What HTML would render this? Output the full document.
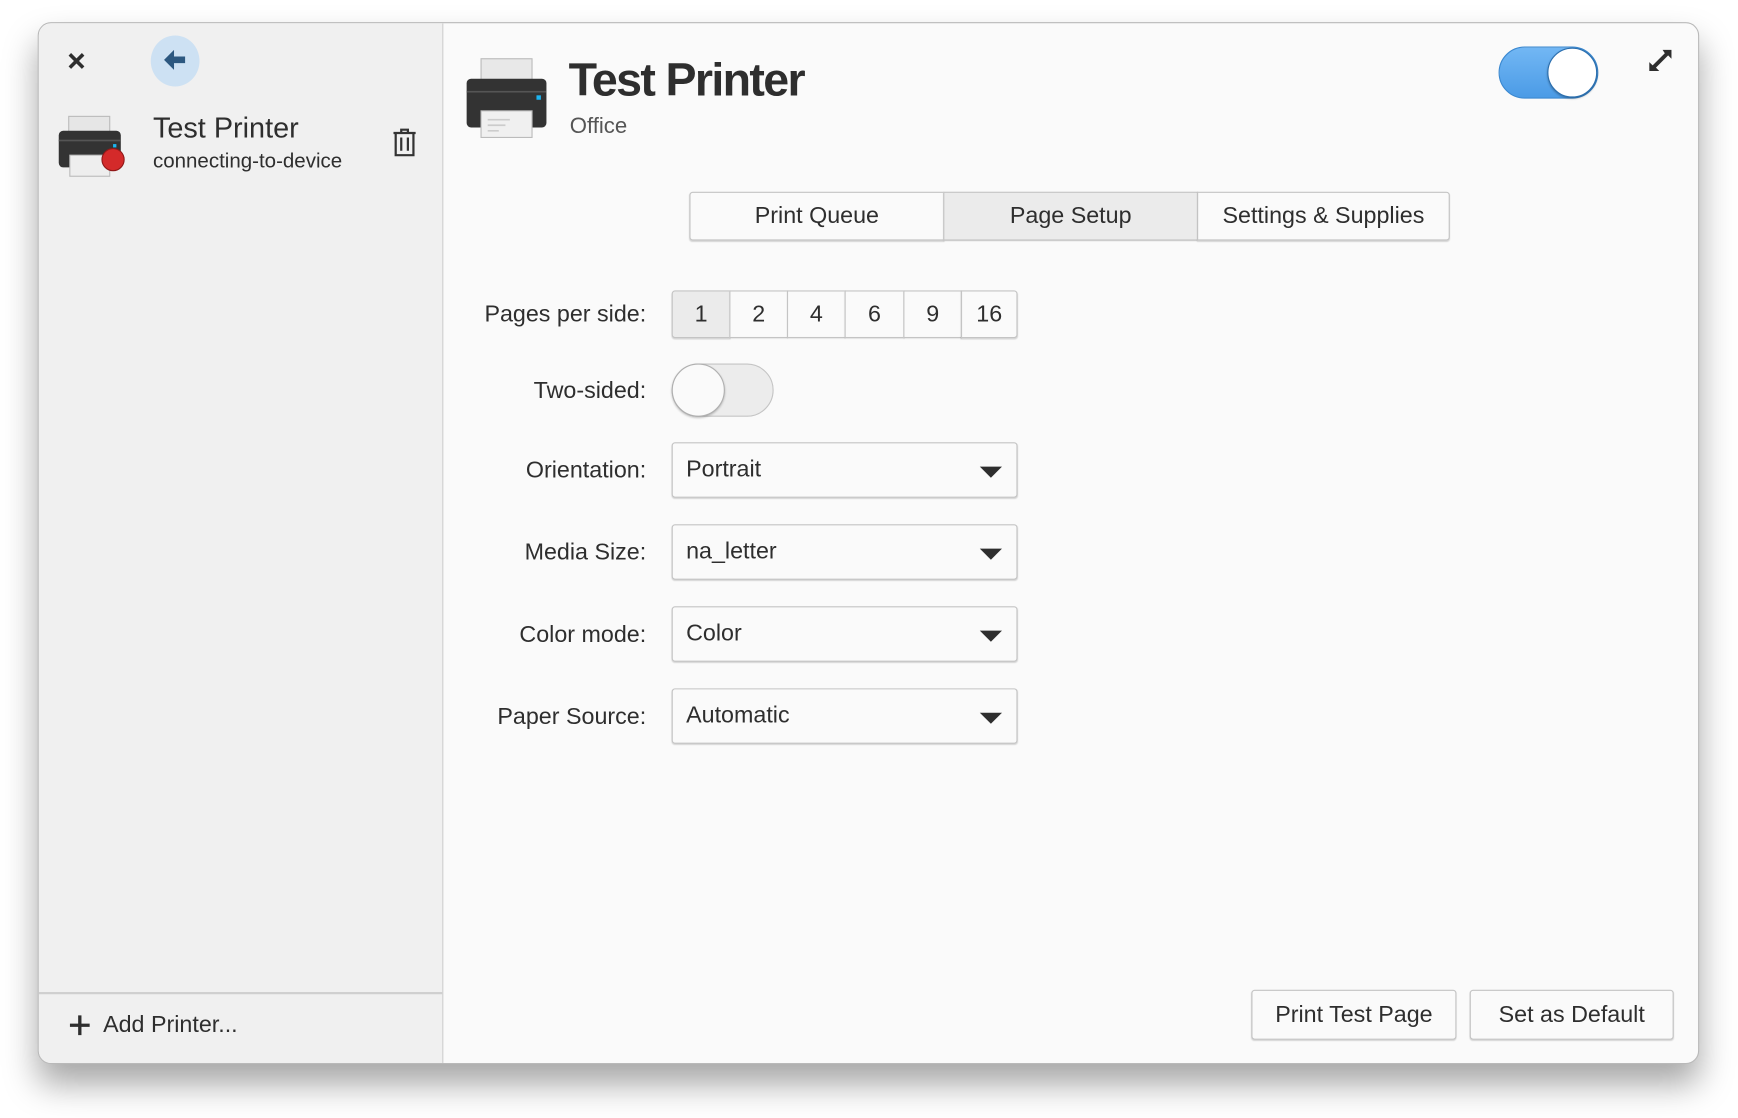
<!DOCTYPE html>
<html><head><meta charset="utf-8"><style>
html,body{margin:0;padding:0;width:1738px;height:1118px;overflow:hidden;background:#fff;}
#s{position:absolute;left:0;top:0;width:1568px;height:1009px;transform:scale(1.1084);transform-origin:0 0;font-family:"Liberation Sans",sans-serif;color:#2e2e2e;}
.a{position:absolute;}
.win{left:34px;top:20px;width:1499px;height:940px;border-radius:12px;background:#fafafa;border:1px solid #b9b9b9;box-sizing:border-box;box-shadow:0 18px 30px rgba(0,0,0,.35);overflow:hidden;}
.side{left:0;top:0;width:364px;height:100%;background:#f0f0f0;border-right:1px solid #cfcfcf;}
.btn{position:absolute;box-sizing:border-box;border:1px solid #c4c4c4;border-radius:3px;background:#fafafa;box-shadow:0 1px 1px rgba(0,0,0,.15);font-size:21px;display:flex;align-items:center;justify-content:center;}
.lbl{position:absolute;right:985px;font-size:21px;text-align:right;white-space:nowrap;}
.dd{position:absolute;left:606px;width:312px;height:50px;box-sizing:border-box;border:1px solid #c4c4c4;border-radius:3px;background:#fafafa;box-shadow:0 1px 1px rgba(0,0,0,.15);font-size:21px;line-height:48px;padding-left:12px;}
.dd:after{content:"";position:absolute;right:13px;top:21px;border-left:10px solid transparent;border-right:10px solid transparent;border-top:10px solid #2e2e2e;}
</style></head><body><div id="s">
<div class="a win">
 <div class="a side">
  <div class="a" style="left:0;top:874px;width:364px;height:2px;background:#cfcfcf"></div>
 </div>
</div>
<!-- sidebar content -->
<svg class="a" style="left:61px;top:47px" width="16" height="16" viewBox="0 0 16 16"><path d="M2 2 L14 14 M14 2 L2 14" stroke="#2e2e2e" stroke-width="3.2"/></svg>
<div class="a" style="left:136px;top:32px;width:44px;height:46px;border-radius:50%;background:#cde1f3"></div>
<svg class="a" style="left:146px;top:42px" width="24" height="24" viewBox="0 0 24 24"><path d="M2 12 L11 3 V9 H21 V15 H11 V21 Z" fill="#2c5880"/></svg>
<svg class="a" style="left:52px;top:104px" width="64" height="56" viewBox="0 0 64 56">
 <rect x="10" y="1" width="37" height="22" fill="#e6e6e6" stroke="#bbb"/>
 <rect x="1" y="14" width="56" height="33" rx="4" fill="#333"/>
 <rect x="1" y="22" width="56" height="1.5" fill="#555"/>
 <rect x="50" y="26" width="3" height="3" fill="#1cb4f0"/>
 <rect x="11" y="36" width="36" height="19" fill="#eee" stroke="#bbb"/>
 <circle cx="50" cy="40" r="10" fill="#d42a2a" stroke="#901818"/>
</svg>
<div class="a" style="left:138px;top:100px;font-size:26px;">Test Printer</div>
<div class="a" style="left:138px;top:134px;font-size:18.5px;">connecting-to-device</div>
<svg class="a" style="left:354px;top:115px" width="24" height="28" viewBox="0 0 24 28"><g fill="none" stroke="#333" stroke-width="2"><path d="M1 5 H21 M8 5 V2 H14 V5 M3 5 V25 H19 V5 M8 9 V21 M14 9 V21"/></g></svg>
<svg class="a" style="left:63px;top:916px" width="18" height="18" viewBox="0 0 18 18"><path d="M9 0 V18 M0 9 H18" stroke="#2e2e2e" stroke-width="3"/></svg>
<div class="a" style="left:93px;top:913px;font-size:21px;">Add Printer...</div>
<!-- header -->
<svg class="a" style="left:420px;top:52px" width="76" height="74" viewBox="0 0 76 74">
 <rect x="14" y="1" width="46" height="28" fill="#e8e8e8" stroke="#bbb"/>
 <rect x="1" y="19" width="72" height="44" rx="4" fill="#333"/>
 <rect x="1" y="30" width="72" height="1.5" fill="#555"/>
 <rect x="64" y="34" width="4" height="4" fill="#1cb4f0"/>
 <rect x="14" y="48" width="46" height="24" fill="#f0f0f0" stroke="#bbb"/>
 <path d="M20 56 H40 M20 61 H36 M20 66 H30" stroke="#ccc" stroke-width="1.5"/>
</svg>
<div class="a" style="left:513px;top:48px;font-size:42px;font-weight:bold;letter-spacing:-1.5px">Test Printer</div>
<div class="a" style="left:514px;top:103px;font-size:20px;color:#555">Office</div>
<div class="a" style="left:1352px;top:42px;width:90px;height:47px;box-sizing:border-box;border-radius:24px;background:linear-gradient(#72b7f4,#4b9be6);border:1px solid #3a88d0"></div>
<div class="a" style="left:1396px;top:43px;width:45px;height:45px;box-sizing:border-box;border-radius:50%;background:#fff;border:1px solid #2a6eae;box-shadow:0 1px 2px rgba(0,0,0,.3)"></div>
<svg class="a" style="left:1486px;top:43px" width="24" height="24" viewBox="0 0 24 24"><path d="M14 2 H22 V10 L19 7 L8 18 L11 21 H2 V13 L5 16 L16 5 Z" fill="#2e2e2e"/></svg>
<!-- tabs -->
<div class="btn" style="left:622px;top:173px;width:230px;height:44px;border-radius:3px 0 0 3px">Print Queue</div>
<div class="btn" style="left:851px;top:173px;width:230px;height:44px;border-radius:0;background:#ebebeb">Page Setup</div>
<div class="btn" style="left:1080px;top:173px;width:228px;height:44px;border-radius:0 3px 3px 0">Settings &amp; Supplies</div>
<!-- form -->
<div class="lbl" style="top:272px">Pages per side:</div>
<div class="btn" style="left:606px;top:262px;width:53px;height:43px;background:#ebebeb;border-radius:3px 0 0 3px">1</div>
<div class="btn" style="left:658px;top:262px;width:53px;height:43px;border-radius:0">2</div>
<div class="btn" style="left:710px;top:262px;width:53px;height:43px;border-radius:0">4</div>
<div class="btn" style="left:762px;top:262px;width:54px;height:43px;border-radius:0">6</div>
<div class="btn" style="left:815px;top:262px;width:53px;height:43px;border-radius:0">9</div>
<div class="btn" style="left:867px;top:262px;width:51px;height:43px;border-radius:0 3px 3px 0">16</div>
<div class="lbl" style="top:341px">Two-sided:</div>
<div class="a" style="left:606px;top:328px;width:92px;height:48px;box-sizing:border-box;border-radius:24px;background:#ececec;border:1px solid #c4c4c4"></div>
<div class="a" style="left:606px;top:328px;width:48px;height:48px;box-sizing:border-box;border-radius:50%;background:#fafafa;border:1px solid #b0b0b0;box-shadow:0 1px 2px rgba(0,0,0,.25)"></div>
<div class="lbl" style="top:413px">Orientation:</div>
<div class="dd" style="top:399px">Portrait</div>
<div class="lbl" style="top:487px">Media Size:</div>
<div class="dd" style="top:473px">na_letter</div>
<div class="lbl" style="top:561px">Color mode:</div>
<div class="dd" style="top:547px">Color</div>
<div class="lbl" style="top:635px">Paper Source:</div>
<div class="dd" style="top:621px">Automatic</div>
<div class="btn" style="left:1129px;top:893px;width:185px;height:45px">Print Test Page</div>
<div class="btn" style="left:1326px;top:893px;width:184px;height:45px">Set as Default</div>
</div></body></html>
